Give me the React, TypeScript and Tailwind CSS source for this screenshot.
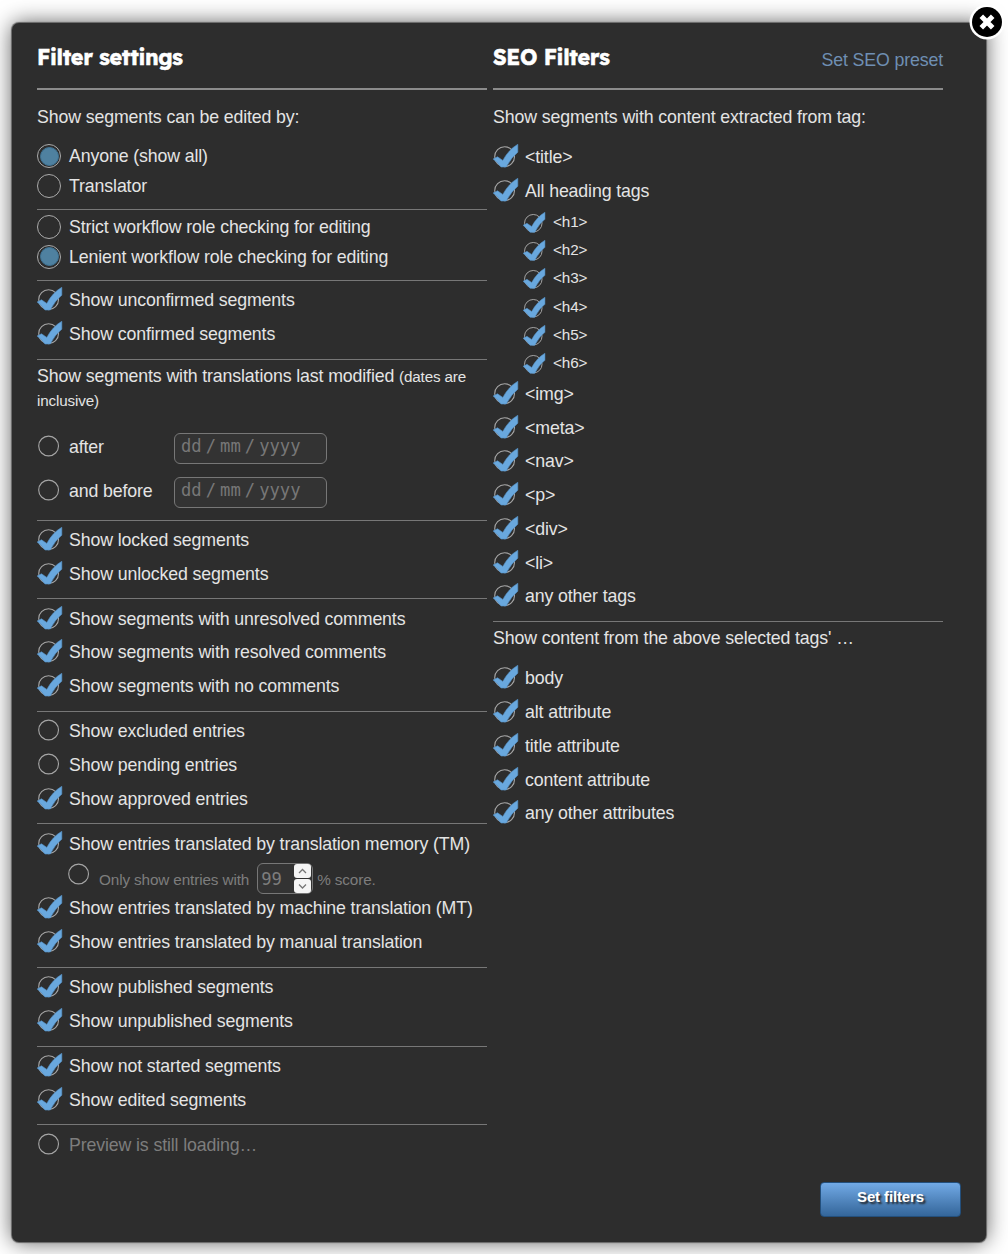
import React from "react";

function CheckIcon({ size = 26, on = true }: { size?: number; on?: boolean }) {
  return (
    <svg width={size} height={size} viewBox="0 0 26 26" className="shrink-0">
      <circle cx="11.6" cy={on ? 12.7 : 12} r="9.9" fill="none" stroke="#a6a6a6" strokeWidth="1.1" />
      {on && (
        <path
          d="M.1 15 L4.5 12.8 L9.8 16.4 Q15.6 5.6 24.8 .3 V8.2 Q18 13.6 13.3 23 H8 Q4.2 17.8 .1 15Z"
          fill="#69a8de"
          stroke="#5592c8"
          strokeWidth=".6"
        />
      )}
    </svg>
  );
}

function Radio({ label, on }: { label: string; on?: boolean }) {
  return (
    <div className="flex h-[30px] items-center">
      <span className="mr-2 flex size-6 shrink-0 items-center justify-center rounded-full border border-[#aaa]">
        {on && <span className="size-[19px] rounded-full border border-[#3f7394] bg-[#4f81a0]" />}
      </span>
      {label}
    </div>
  );
}

function Row({ label, off, dim }: { label: string; off?: boolean; dim?: boolean }) {
  return (
    <div className={dim ? "flex h-[33.75px] items-center text-[#7d7d7d]" : "flex h-[33.75px] items-center"}>
      <CheckIcon on={!off} />
      <span className="ml-[6px]">{label}</span>
    </div>
  );
}

function Group({ children }: { children: React.ReactNode }) {
  return <section className="border-t border-[#777] pt-[2.25px] pb-2">{children}</section>;
}

function DateRow({ label }: { label: string }) {
  return (
    <div className="flex h-11 items-center">
      <CheckIcon on={false} />
      <span className="ml-[6px] w-[105px]">{label}</span>
      <span className="mt-[3px] flex h-[31px] w-[153px] items-center gap-[4px] rounded-[6px] border border-[#777] bg-[#333] pb-1 pl-[6px] font-['DejaVu_Sans_Mono','Liberation_Mono',monospace] text-[17.2px] tracking-normal text-[#777]">
        <span>dd</span>
        <span>/</span>
        <span>mm</span>
        <span>/</span>
        <span>yyyy</span>
      </span>
    </div>
  );
}

const heading =
  "pt-[3px] font-['Lexend','Lato',sans-serif] text-[21.5px] font-bold tracking-[-0.3px] text-white [-webkit-text-stroke:0.5px_#fff]";

export default function App() {
  return (
    <main className="h-[1254px] w-[1008px] overflow-hidden bg-white pt-[23px] pl-3 font-['Liberation_Sans',Arial,sans-serif] text-[17.75px] leading-6 tracking-[-0.13px] text-[#e4e4e4]">
      <div className="relative flex h-[1219px] w-[974px] flex-col rounded-[7px] bg-[#2d2d2d] pl-[25px] shadow-[0_0_1px_1px_#666,0_0_22px_rgba(0,0,0,0.65)]">
        <svg width="36" height="36" viewBox="0 0 36 36" className="absolute -top-[19px] -right-[18.5px]">
          <circle cx="18" cy="18" r="17.5" fill="#fff" />
          <circle cx="18" cy="18" r="15" fill="#000" />
          <path d="m12.3 12.3 11.4 11.4m0-11.4L12.3 23.7" stroke="#fff" strokeWidth="5" />
        </svg>
        <div className="flex gap-[6px]">
          <div className="w-[450px]">
            <header className="flex h-[67px] items-center border-b-2 border-[#8b8b8b]">
              <h2 className={heading}>Filter settings</h2>
            </header>
            <p className="h-[51px] pt-[15px]">Show segments can be edited by:</p>
            <div className="pb-[7.5px]">
              <Radio label="Anyone (show all)" on />
              <Radio label="Translator" />
            </div>
            <Group>
              <Radio label="Strict workflow role checking for editing" />
              <Radio label="Lenient workflow role checking for editing" on />
            </Group>
            <Group>
              <Row label="Show unconfirmed segments" />
              <Row label="Show confirmed segments" />
            </Group>
            <section className="h-[161.2px] border-t border-[#777] pt-1">
              <div className="h-[61px]">
                <p className="flex whitespace-pre">
                  <span>Show segments with translations last modified </span>
                  <span className="pt-px text-[15.2px]">(dates are</span>
                </p>
                <p className="text-[15.2px]">inclusive)</p>
              </div>
              <DateRow label="after" />
              <DateRow label="and before" />
            </section>
            <Group>
              <Row label="Show locked segments" />
              <Row label="Show unlocked segments" />
            </Group>
            <Group>
              <Row label="Show segments with unresolved comments" />
              <Row label="Show segments with resolved comments" />
              <Row label="Show segments with no comments" />
            </Group>
            <Group>
              <Row label="Show excluded entries" off />
              <Row label="Show pending entries" off />
              <Row label="Show approved entries" />
            </Group>
            <Group>
              <Row label="Show entries translated by translation memory (TM)" />
              <div className="flex h-[31px] items-center pl-[30px] text-[15.3px] text-[#7d7d7d]">
                <span className="-mt-px flex">
                  <CheckIcon on={false} />
                </span>
                <span className="mt-[9px] ml-[6px]">Only show entries with</span>
                <span className="mt-[5px] ml-2 flex h-[31px] w-14 shrink-0 items-center justify-between rounded-[6px] border border-[#777] bg-[#333] pl-[3px] font-['DejaVu_Sans_Mono',monospace] text-[17.2px] tracking-normal">
                  <span className="pt-[2px]">99</span>
                  <span className="flex flex-col gap-px pr-px">
                    {["m5 9 3.5-3.5L12 9", "m5 5.5 3.5 3.5L12 5.5"].map((d) => (
                      <svg key={d} width="17" height="14" viewBox="0 0 17 14" className="rounded-[3px] bg-[#f5f5f5]">
                        <path d={d} fill="none" stroke="#777" strokeWidth="1.3" />
                      </svg>
                    ))}
                  </span>
                </span>
                <span className="mt-[9px] ml-1">% score.</span>
              </div>
              <Row label="Show entries translated by machine translation (MT)" />
              <Row label="Show entries translated by manual translation" />
            </Group>
            <Group>
              <Row label="Show published segments" />
              <Row label="Show unpublished segments" />
            </Group>
            <Group>
              <Row label="Show not started segments" />
              <Row label="Show edited segments" />
            </Group>
            <Group>
              <Row label="Preview is still loading…" off dim />
            </Group>
          </div>
          <div className="w-[450px]">
            <header className="flex h-[67px] items-center justify-between border-b-2 border-[#8b8b8b]">
              <h2 className={heading}>SEO Filters</h2>
              <a className="pt-[9px] text-[#6f8fb3]">Set SEO preset</a>
            </header>
            <p className="h-[50.4px] pt-[15px]">Show segments with content extracted from tag:</p>
            <Row label="<title>" />
            <Row label="All heading tags" />
            {["<h1>", "<h2>", "<h3>", "<h4>", "<h5>", "<h6>"].map((t) => (
              <div key={t} className="flex h-[28.2px] items-center pl-[30px] text-[15.3px]">
                <span className="flex pt-[3px]">
                  <CheckIcon size={23} />
                </span>
                <span className="ml-[7px]">{t}</span>
              </div>
            ))}
            {["<img>", "<meta>", "<nav>", "<p>", "<div>", "<li>", "any other tags"].map((t) => (
              <Row key={t} label={t} />
            ))}
            <p className="mt-2 h-[40.2px] border-t border-[#777] pt-1">Show content from the above selected tags' …</p>
            {["body", "alt attribute", "title attribute", "content attribute", "any other attributes"].map((t) => (
              <Row key={t} label={t} />
            ))}
          </div>
        </div>
        <button className="mt-auto mr-[25px] mb-[25px] h-[35px] w-[141px] self-end rounded-[4px] border border-[#234f7c] bg-linear-to-b from-[#72aae6] to-[#34669a] pb-[6px] text-[15px] leading-5 font-bold text-white [text-shadow:2px_2px_2px_#222]">
          Set filters
        </button>
      </div>
    </main>
  );
}
